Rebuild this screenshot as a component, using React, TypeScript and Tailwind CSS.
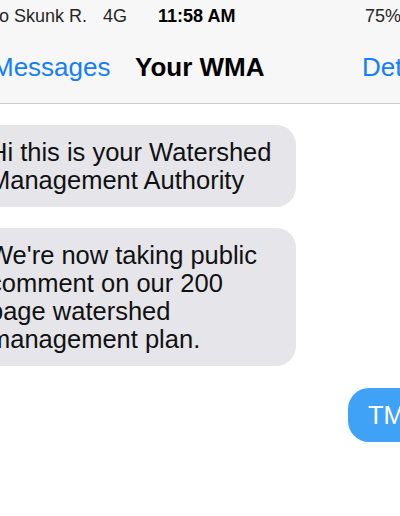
export default function App() {
  return (
    <div
      className="w-[400px] h-[516px] overflow-hidden bg-white"
      style={{ fontFamily: '"Liberation Sans", Arial, sans-serif' }}
    >
      <div className="bg-[#f7f7f7] border-b border-[#cdcdcd] pt-[7px] pb-[23px]">
        <div className="flex h-[18px] text-[18px] leading-[18px] text-[#262626] whitespace-nowrap">
          <div className="w-[159px] shrink-0 flex ml-[-1px]">
            <span>o Skunk R.</span>
            <span className="ml-[16px]">4G</span>
          </div>
          <div className="w-[207px] shrink-0 font-bold text-black">11:58 AM</div>
          <div className="shrink-0">75%</div>
        </div>
        <div className="flex mt-[29px] h-[26px] text-[26px] leading-[26px] whitespace-nowrap">
          <div className="ml-[-8px] w-[143px] shrink-0 text-[#147efb]">Messages</div>
          <div className="w-[227px] shrink-0 font-bold text-black">Your WMA</div>
          <div className="shrink-0 text-[#147efb]">Details</div>
        </div>
      </div>
      <div className="flex flex-col items-start pt-[21px] text-[25.5px] leading-[28px] whitespace-nowrap">
        <div className="ml-[-25px] w-[321px] shrink-0 rounded-[20px] bg-[#e5e5ea] py-[13px] pl-[14px] text-[#111]">
          Hi this is your Watershed
          <br />
          Management Authority
        </div>
        <div className="mt-[21px] ml-[-25px] w-[321px] shrink-0 rounded-[20px] bg-[#e5e5ea] py-[13px] pl-[14px] text-[#111]">
          We're now taking public
          <br />
          comment on our 200
          <br />
          page watershed
          <br />
          management plan.
        </div>
        <div className="mt-[22px] ml-[348px] w-max shrink-0 rounded-[21px] bg-[#3fa2f7] py-[13px] pl-[20px] pr-[20px] text-white">
          TMI
        </div>
      </div>
    </div>
  );
}
